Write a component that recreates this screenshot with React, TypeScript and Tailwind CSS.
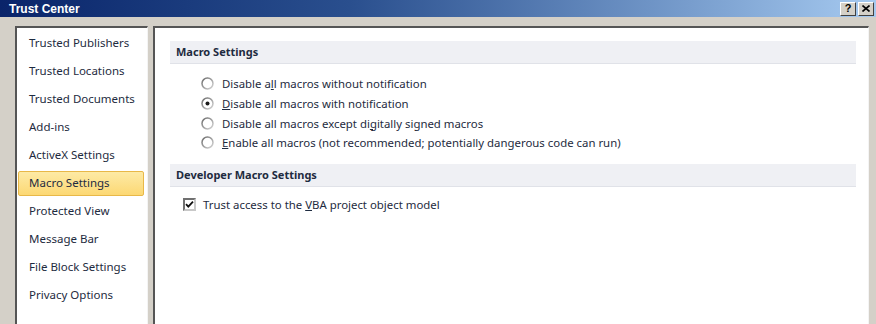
import React from "react";

const navItems = [
  "Trusted Publishers",
  "Trusted Locations",
  "Trusted Documents",
  "Add-ins",
  "ActiveX Settings",
  "Macro Settings",
  "Protected View",
  "Message Bar",
  "File Block Settings",
  "Privacy Options",
];

function Radio({ checked }: { checked?: boolean }) {
  return (
    <svg width="13" height="13" viewBox="0 0 13 13" className="shrink-0">
      <defs>
        <linearGradient id="rg" x1="0" y1="0" x2="1" y2="1">
          <stop offset="0" stopColor="#6a6a6a" />
          <stop offset="1" stopColor="#d8d8d8" />
        </linearGradient>
      </defs>
      <circle cx="6.5" cy="6.5" r="5.5" fill="#ffffff" stroke="url(#rg)" strokeWidth="1.5" />
      {checked && <circle cx="6.5" cy="6.5" r="2" fill="#1a1a1a" />}
    </svg>
  );
}

function Checkbox() {
  return (
    <div className="w-[13px] h-[13px] shrink-0 border-2 border-t-[#707070] border-l-[#707070] border-b-[#c8c8c8] border-r-[#c8c8c8] bg-white flex items-center justify-center">
      <svg width="9" height="9" viewBox="0 0 9 9">
        <path d="M1 4.2 L3.3 6.6 L8 1.6" fill="none" stroke="#111" strokeWidth="1.8" />
      </svg>
    </div>
  );
}

export default function App() {
  const font = { fontFamily: "'Noto Sans', 'Open Sans', sans-serif" };
  return (
    <div className="w-[876px] h-[324px] bg-[#d4d0c8] overflow-hidden flex flex-col" style={font}>
      {/* Title bar */}
      <div className="h-[17px] shrink-0 flex items-center justify-between pl-[9px] pr-[2px] bg-gradient-to-r from-[#0a246a] via-[#2a4f8e] via-40% to-[#a6caf0]">
        <span className="text-white text-[12px] font-bold leading-none" style={{ fontFamily: "'Liberation Sans', Arial, sans-serif" }}>
          Trust Center
        </span>
        <div className="flex gap-[2px]">
          <div className="w-[16px] h-[14px] bg-[#d4d0c8] border border-t-white border-l-white border-b-[#404040] border-r-[#404040] flex items-center justify-center text-[11px] font-bold leading-none text-black" style={{ fontFamily: "'Liberation Sans', Arial, sans-serif" }}>
            ?
          </div>
          <div className="w-[16px] h-[14px] bg-[#d4d0c8] border border-t-white border-l-white border-b-[#404040] border-r-[#404040] flex items-center justify-center">
            <svg width="8" height="7" viewBox="0 0 8 7">
              <path d="M0.5 0.5 L7.5 6.5 M7.5 0.5 L0.5 6.5" stroke="#000" strokeWidth="1.6" />
            </svg>
          </div>
        </div>
      </div>

      {/* Body */}
      <div className="flex-1 flex pt-[9px] pl-[15px] pr-[7px] gap-[5px]">
        {/* Left nav */}
        <div className="w-[133px] shrink-0 h-[320px] border-t-2 border-l-2 border-t-[#555] border-l-[#555] border-r border-r-[#f4f4f4] bg-white">
          <div className="pt-[1px] pl-[1px] pr-[3px] flex flex-col">
            {navItems.map((item) => {
              const sel = item === "Macro Settings";
              return (
                <div key={item} className="h-[28px] flex items-center">
                  <div
                    className={
                      "w-full h-[25px] flex items-center text-[11.5px] text-[#1e2b40] rounded-[2px] " +
                      (sel
                        ? "bg-gradient-to-b from-[#fdeaa5] to-[#fcd873] border border-[#e8b848] pl-[10px]"
                        : "pl-[11px]")
                    }
                  >
                    {item}
                  </div>
                </div>
              );
            })}
          </div>
        </div>

        {/* Right content */}
        <div className="flex-1 h-[320px] border-t-2 border-l-2 border-t-[#555] border-l-[#555] border-r border-r-[#f4f4f4] bg-white">
          <div className="pt-[13px] pl-[15px] pr-[12px]">
            <div className="h-[23px] flex items-center pl-[6px] bg-[#eff0f4] border-b border-[#e0e2e8] text-[11px] font-bold text-[#1e2b40]">
              Macro Settings
            </div>
            <div className="pt-[10px] pl-[31px] flex flex-col text-[11.4px] text-[#1e2b40]">
              <div className="h-[19.7px] flex items-center gap-[8px]">
                <Radio />
                <span>Disable a<u>l</u>l macros without notification</span>
              </div>
              <div className="h-[19.7px] flex items-center gap-[8px]">
                <Radio checked />
                <span><u>D</u>isable all macros with notification</span>
              </div>
              <div className="h-[19.7px] flex items-center gap-[8px]">
                <Radio />
                <span>Disable all macros except di<u>g</u>itally signed macros</span>
              </div>
              <div className="h-[19.7px] flex items-center gap-[8px]">
                <Radio />
                <span><u>E</u>nable all macros (not recommended; potentially dangerous code can run)</span>
              </div>
            </div>
            <div className="mt-[11px] h-[23px] flex items-center pl-[6px] bg-[#eff0f4] border-b border-[#e0e2e8] text-[11px] font-bold text-[#1e2b40]">
              Developer Macro Settings
            </div>
            <div className="pt-[7px] pl-[13px] h-[28px] flex items-center gap-[7px] text-[11.4px] text-[#1e2b40]">
              <Checkbox />
              <span>Trust access to the <u>V</u>BA project object model</span>
            </div>
          </div>
        </div>
      </div>
    </div>
  );
}
